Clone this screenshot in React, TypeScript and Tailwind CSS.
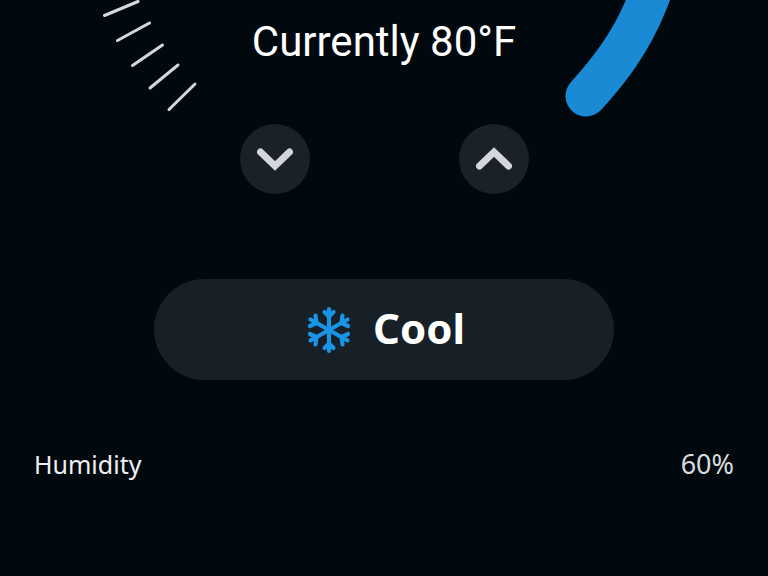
export default function App() {
  const ticks = [
    [104.5, 15.5, 138, 1.5],
    [117.5, 40.5, 149.5, 23],
    [132.5, 65.5, 162.5, 45],
    [150, 88, 178, 65],
    [169, 109.5, 195, 84],
  ];
  return (
    <div className="relative w-[768px] h-[576px] overflow-hidden bg-[#01090f] text-white font-['Roboto',sans-serif]">
      <svg className="absolute inset-0" width="768" height="576" viewBox="0 0 768 576" fill="none">
        {ticks.map(([a, b, c, d], i) => (
          <line key={i} x1={a} y1={b} x2={c} y2={d} stroke="#d5d8da" strokeWidth="3" strokeLinecap="round" />
        ))}
        <path d="M586 96 C 606 74 631 44 648 0 L 656 -20" stroke="#1a8ad4" strokeWidth="41" strokeLinecap="round" />
      </svg>
      <div className="relative flex flex-col items-center">
        <div className="mt-[18px] h-[48px] leading-[48px] text-[42px]">Currently 80°F</div>
        <div className="mt-[58px] flex gap-[149px]">
          <button className="w-[70px] h-[70px] rounded-full bg-[#1a2127] flex items-center justify-center">
            <svg width="36" height="24" viewBox="0 0 36 24" fill="none">
              <path d="M3.5 5 L18 19 L32.5 5" stroke="#d3d6da" strokeWidth="7" strokeLinecap="round" strokeLinejoin="miter" />
            </svg>
          </button>
          <button className="w-[70px] h-[70px] rounded-full bg-[#1a2127] flex items-center justify-center">
            <svg width="36" height="24" viewBox="0 0 36 24" fill="none">
              <path d="M3.5 19 L18 5 L32.5 19" stroke="#d3d6da" strokeWidth="7" strokeLinecap="round" strokeLinejoin="miter" />
            </svg>
          </button>
        </div>
        <div className="mt-[85px] w-[460px] h-[101px] rounded-full bg-[#172026] flex items-center justify-center gap-[21px] pl-[3px]">
          <svg width="46" height="48" viewBox="0 0 46 48" fill="none" stroke="#1a94e6" strokeWidth="4.2" strokeLinecap="round" strokeLinejoin="round">
            <path d="M23 3 V45" />
            <path d="M18.5 6 L23 10.5 L27.5 6 M18.5 42 L23 37.5 L27.5 42" />
            <path d="M4.5 13.5 L41.5 34.5 M41.5 13.5 L4.5 34.5" />
            <path d="M4 20 L10.5 17 L9.5 9.5 M42 28 L35.5 31 L36.5 38.5 M42 20 L35.5 17 L36.5 9.5 M4 28 L10.5 31 L9.5 38.5" />
          </svg>
          <span className="font-['Noto_Sans',sans-serif] font-bold text-[42px] leading-none -mt-[4px]">Cool</span>
        </div>
        <div className="mt-[69px] w-full px-[34px] flex justify-between items-center font-['Noto_Sans',sans-serif] text-[25px] leading-[30px] text-[#eef0f1]">
          <span>Humidity</span>
          <span className="text-[27px] text-[#d9dcde]">60%</span>
        </div>
      </div>
    </div>
  );
}
